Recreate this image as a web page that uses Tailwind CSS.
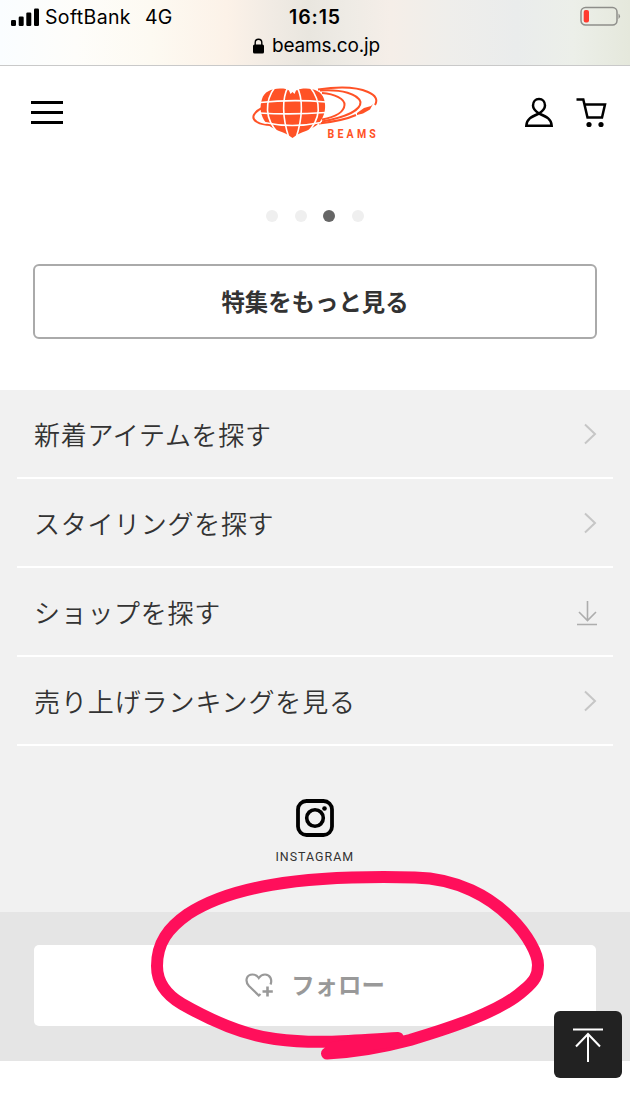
<!DOCTYPE html>
<html lang="ja">
  <head>
    <meta charset="UTF-8" />
    <meta name="viewport" content="width=device-width, initial-scale=1.0" />
    <title>BEAMS</title>
    <script src="https://cdn.jsdelivr.net/npm/@tailwindcss/browser@4"></script>
  </head>
  <body class="relative h-[1120px] w-[630px] overflow-hidden bg-white font-['Noto_Sans_CJK_JP',sans-serif] text-[#333]">
    <!-- Browser status bar -->
    <div class="h-[66px] border-b border-[#c9c9c9] bg-[linear-gradient(90deg,#fafdff_0%,#fefdfa_12%,#fdfaf2_24%,#fcf2e8_36%,#f1ebe4_43%,#e9e6df_49%,#eeebe5_55%,#f5eee8_62%,#efeeeb_71%,#eaecec_82%,#ecefe9_91%,#e5e8dc_100%)] font-['Inter',sans-serif] text-black">
      <div class="grid h-[34px] grid-cols-3 items-center pr-[9px] pl-[11px]">
        <div class="flex items-center pt-px">
          <svg class="mr-[6px] mb-[2px] h-[18px] w-[28px]" viewBox="0 0 28 18">
            <rect x="0" y="12" width="5" height="6" rx="1.2" />
            <rect x="7.7" y="8.5" width="5" height="9.5" rx="1.2" />
            <rect x="15.3" y="4.5" width="5" height="13.5" rx="1.2" />
            <rect x="23" y="0.5" width="5" height="17.5" rx="1.2" />
          </svg>
          <span class="text-[19.5px] tracking-[0.35px]">SoftBank</span>
          <span class="ml-[14px] text-[19.5px] tracking-[0.3px]">4G</span>
        </div>
        <span class="pt-[2px] pr-[2px] text-center text-[19.5px] font-semibold tracking-[0.9px]">16:15</span>
        <svg class="mb-[2px] h-[20px] w-[41px] justify-self-end" viewBox="0 0 41 20" fill="none">
          <rect x="1" y="1.5" width="36" height="17.5" rx="4.5" stroke="#8e8e8a" stroke-width="1.5" />
          <rect x="3.7" y="4" width="5.3" height="12.5" rx="2" fill="#ff3b30" />
          <path d="M38.5 7.5q3 2.5 0 5.5z" fill="#8e8e8a" />
        </svg>
      </div>
      <div class="flex h-[23px] items-center justify-center gap-[8px] pl-[3px]">
        <svg class="h-[16px] w-[11px]" viewBox="0 0 11 16">
          <rect x="0" y="6.5" width="11" height="9" rx="1.5" />
          <path d="M2.2 7V4.5a3.3 3.3 0 0 1 6.6 0V7" fill="none" stroke="#000" stroke-width="1.4" />
        </svg>
        <span class="text-[19px] leading-none tracking-[-0.15px]">beams.co.jp</span>
      </div>
    </div>

    <!-- Site header -->
    <header class="grid h-[92px] grid-cols-3 items-center pr-[23px] pl-[31px]">
      <button class="flex w-[32px] flex-col gap-[7px]" aria-label="menu">
        <span class="h-[3px] bg-black"></span>
        <span class="h-[3px] bg-black"></span>
        <span class="h-[3px] bg-black"></span>
      </button>
      <svg class="mt-[6px] ml-[29px] h-[58px] w-[134px]" viewBox="252 86 134 58" fill="none">
        <g stroke="#ff5226" stroke-width="2">
          <path d="M318 89.5C338 86.5 357 87 368 92C376 95.5 378 100 375 105" />
          <path d="M320 90.5C342 89 358 94 360.5 102C361 110 346 117 322 121.5" />
          <path d="M322 93C335 94 345 99 344.5 105C344 112 335 117 322 119.5" />
          <path d="M356 115C346 119.5 332 122 319 123.5" />
          <path d="M262 108C254 112 250 118 257 122C261 124.5 266 125 271 125" />
        </g>
        <path d="M357 113L364 108L371 106L373 104L370 109.5L363 113.5L357 115Z" fill="#ff5226" />
        <path d="M262 99C264 92 271 88.5 280 88.5C285 88.5 287 89 289 90.5L290.5 94L292.5 92L294.5 94L296 90.5C299 89 302 88.5 306 88.5C315 88.5 322 92 324 99C326.5 107 325 116 319 123C311 131 301 131 292.5 138C284 131 274 131 266 123C260 115 259.5 107 262 99Z" fill="#ff5226" />
        <g stroke="#fff" stroke-width="1.6">
          <path d="M260 102.5Q292 99 326 102" />
          <path d="M259 113Q292 115 326 112.5" />
          <path d="M264 122.5Q292 128.5 321 122.5" />
          <path d="M288 87C282 98 282 117 289 138" />
          <path d="M297 87C303 98 303 117 296 138" />
          <path d="M275 87C264 102 265 119 278 133" />
          <path d="M310 87C322 102 321 119 307 133" />
        </g>
        <g transform="translate(327.5 138) scale(0.78 1)">
          <text x="0" y="0" textLength="62" font-family="Roboto, sans-serif" font-size="13.5" font-weight="700" fill="#ff5226">BEAMS</text>
        </g>
      </svg>
      <div class="flex items-center justify-end gap-[23px]">
        <svg class="h-[31px] w-[28px]" viewBox="0 0 28 31" fill="none" stroke="#000" stroke-width="2.5">
          <path d="M14 16.5C9.5 13.5 8 11.5 8 8.5C8 4.5 10.5 2 14 2C17.5 2 20 4.5 20 8.5C20 11.5 18.5 13.5 14 16.5C6 20 1.7 22 1.3 28.7H26.7C26.3 22 22 20 14 16.5Z" />
        </svg>
        <svg class="h-[31px] w-[31px]" viewBox="0 0 31 31" fill="none" stroke="#000" stroke-width="2.5">
          <path d="M0.5 2.5H7.3L11.5 20.5H26L29 7.5H8.5" />
          <circle cx="13" cy="27.5" r="2.6" fill="#000" stroke="none" />
          <circle cx="25" cy="27.5" r="2.6" fill="#000" stroke="none" />
        </svg>
      </div>
    </header>

    <!-- Features -->
    <section class="h-[232px] px-[33px] pt-[52px]">
      <div class="flex justify-center gap-[16.5px]">
        <span class="size-[12px] rounded-full bg-[#efefef]"></span>
        <span class="size-[12px] rounded-full bg-[#efefef]"></span>
        <span class="size-[12px] rounded-full bg-[#666]"></span>
        <span class="size-[12px] rounded-full bg-[#efefef]"></span>
      </div>
      <a href="#" class="mt-[42px] flex h-[75px] items-center justify-center rounded-[6px] border-2 border-[#aaa] text-[23.4px] font-bold">特集をもっと見る</a>
    </section>

    <!-- Search links -->
    <section class="h-[522px] bg-[#f1f1f1] px-[17px]">
      <ul class="text-[26px] font-[350] tracking-[0.7px]">
        <li class="flex h-[89px] items-center justify-between border-b-2 border-white pr-[16px] pl-[17px]">
          <span>新着アイテムを探す</span>
          <svg class="h-[22px] w-[14px]" viewBox="0 0 14 22" fill="none" stroke="#c6c6c6" stroke-width="2"><path d="M2 1.5L12 11L2 20.5" /></svg>
        </li>
        <li class="flex h-[89px] items-center justify-between border-b-2 border-white pr-[16px] pl-[17px]">
          <span>スタイリングを探す</span>
          <svg class="h-[22px] w-[14px]" viewBox="0 0 14 22" fill="none" stroke="#c6c6c6" stroke-width="2"><path d="M2 1.5L12 11L2 20.5" /></svg>
        </li>
        <li class="flex h-[89px] items-center justify-between border-b-2 border-white pr-[16px] pl-[17px]">
          <span>ショップを探す</span>
          <svg class="mt-[4px] h-[25px] w-[20px]" viewBox="0 0 20 25" fill="none" stroke="#adadad" stroke-width="1.6"><path d="M10.5 0V20M2 11L10.5 19.5L19 11M0 23.5H20" /></svg>
        </li>
        <li class="flex h-[89px] items-center justify-between border-b-2 border-white pr-[16px] pl-[17px]">
          <span class="tracking-[0.9px]">売り上げランキングを見る</span>
          <svg class="h-[22px] w-[14px]" viewBox="0 0 14 22" fill="none" stroke="#c6c6c6" stroke-width="2"><path d="M2 1.5L12 11L2 20.5" /></svg>
        </li>
      </ul>
      <div class="flex flex-col items-center pt-[53px]">
        <svg class="h-[38px] w-[38px]" viewBox="0 0 38 38" fill="none" stroke="#000">
          <rect x="2" y="2" width="34" height="34" rx="8.5" stroke-width="3.8" />
          <circle cx="19" cy="19" r="8.3" stroke-width="3.6" />
          <circle cx="28.5" cy="9.5" r="2.3" fill="#000" stroke="none" />
        </svg>
        <span class="mt-[9px] origin-center scale-x-[0.92] font-['Roboto',sans-serif] text-[13.5px] leading-[20px] tracking-[1.1px]">INSTAGRAM</span>
      </div>
    </section>

    <!-- Follow -->
    <section class="h-[149px] bg-[#e5e5e5] px-[34px] pt-[33px]">
      <button class="flex h-[81px] w-full items-center justify-center rounded-[5px] bg-white text-[#999]">
        <svg class="mr-[18px] mb-px h-[24px] w-[28px]" viewBox="0 0 28 24" fill="none" stroke="#999" stroke-width="2.2">
          <path d="M15.5 21L13.8 22.5L4 13C-0.5 8 1.5 1.5 7.5 1.5C10.5 1.5 12.5 3 13.8 5C15.5 2.5 17.5 1.5 20 1.5C25 1.5 27.5 6.5 25.5 11.5" />
          <path d="M22.5 13.5V23.5M17.5 18.5H27.8" stroke-width="2.6" />
        </svg>
        <span class="pb-[2px] text-[23.4px] font-bold">フォロー</span>
      </button>
    </section>

    <!-- Marker stroke drawn around the follow button -->
    <svg class="absolute top-[860px] left-[130px] h-[210px] w-[430px]" viewBox="0 0 430 210" fill="none" stroke="#ff0f5b" stroke-width="12" stroke-linecap="round" stroke-linejoin="round">
      <path d="M268 178C225 180 190 185 145 179C111 174.5 80 160 52 144C34 133.5 27 121 27 106C27 83 38 68 58 54C98 28 165 14.5 285 17.5C328 18.5 360 37 381 58C398 75 408 94 408 105C408 115 405 121 394 130C370 152 320 168 280 180C250 188 228 192 197 193.5" />
      <path d="M203 189L262 180" stroke-width="14" />
    </svg>

    <!-- Back to top -->
    <button class="absolute top-[1011px] left-[554px] flex h-[67px] w-[68px] items-center justify-center rounded-[6px] bg-[#222]" aria-label="top">
      <svg class="h-[34px] w-[30px]" viewBox="0 0 30 34" fill="none" stroke="#fff" stroke-width="2">
        <path d="M0 1.5H30M15 34V6M3 18.5L15 6L27 18.5" />
      </svg>
    </button>
  </body>
</html>
